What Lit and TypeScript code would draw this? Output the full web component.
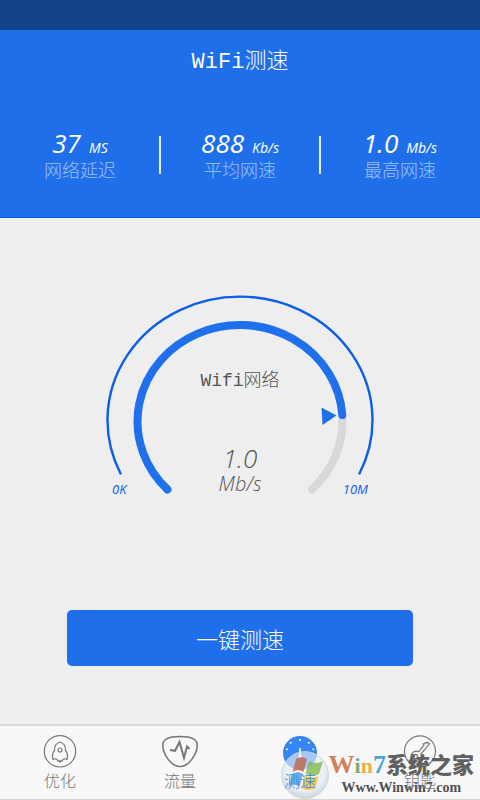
import { LitElement, html, svg, css } from "lit";
import { customElement } from "lit/decorators.js";

const stats = [
  { value: "37", unit: "MS", label: "网络延迟" },
  { value: "888", unit: "Kb/s", label: "平均网速" },
  { value: "1.0", unit: "Mb/s", label: "最高网速" },
];

const tabs = [
  {
    label: "优化",
    active: false,
    icon: svg`<circle cx="18" cy="16.300" r="15.700"/>
      <path d="M18 7c-4 1-5.600 5-5.600 9-2 1.500-2.200 5-1.600 8.200 1.500-.6 2.500-.6 4 0l1.200 2 1-.6 1 1.600 1-1.600 1 .6 1.200-2c1.500-.6 2.500-.6 4 0 .6-3.200.4-6.700-1.600-8.200 0-4-1.600-8-5.600-9z"/>
      <circle cx="18" cy="15" r="2"/>`,
  },
  {
    label: "流量",
    active: false,
    icon: svg`<path class="rim" d="M18 1.500C28 1.500 35.200 4 35.200 10 35.200 19 27 31.500 18 31.500S.8 19 .8 10C.8 4 8 1.500 18 1.500z"/>
      <path class="bold" d="M8 15l5 .8L17.500 7 22 23l3-11.500 2.500 2.500"/>`,
  },
  {
    label: "测速",
    active: true,
    icon: svg`<circle class="disc" cx="18" cy="18" r="17"/>
      <path class="hand" d="M17.300 13h1.400l.8 10h-3z"/>
      <g class="ticks"><circle cx="18" cy="5" r="1"/><circle cx="8.700" cy="7.700" r="1"/><circle cx="26.700" cy="7.700" r="1"/><circle cx="5" cy="14.300" r="1"/><circle cx="31.300" cy="14.300" r="1"/></g>`,
  },
  {
    label: "钥匙",
    active: false,
    icon: svg`<circle cx="18" cy="16.300" r="15.500"/>
      <path d="M16.500 16.800L22 10.200l-.8-1.200 1.600-.4.600-1.200 1.400.6.800-.8 2 1.600-8.800 10.400a5.200 5.200 0 1 1-2.300-2.400z"/>
      <circle cx="13.500" cy="21.500" r="2.200"/>`,
  },
];

@customElement("app-root")
export class AppRoot extends LitElement {
  static styles = css`
    :host {
      display: flex;
      flex-direction: column;
      min-height: 100vh;
      background: #eee;
      color: #555;
      font-family: "Liberation Mono", "Noto Sans CJK SC", monospace;
      font-weight: 300;
    }
    * { box-sizing: border-box; }
    .status { height: 30px; background: #134389; }
    header {
      background: #206fea;
      color: #fff;
      padding: 17px 0 32px;
      border-bottom: 1px solid #0a5ae6;
    }
    h1 {
      margin: 0;
      font-size: 22px;
      line-height: 32px;
      font-weight: 300;
      text-align: center;
    }
    .stats {
      display: grid;
      grid-template-columns: repeat(3, 1fr);
      margin-top: 48px;
    }
    .stat { position: relative; text-align: center; }
    .stat + .stat::before {
      content: "";
      position: absolute;
      left: -1px;
      top: 9px;
      width: 2px;
      height: 38px;
      background: #e3edff;
    }
    .reading {
      display: flex;
      justify-content: center;
      align-items: baseline;
      gap: 8px;
      height: 32px;
    }
    .num, .unit, .speed, .per { font-family: "Open Sans", "Liberation Sans", sans-serif; font-style: italic; }
    .num { font-size: 26px; line-height: 32px; font-weight: 400; }
    .unit { font-size: 14px; line-height: 20px; font-weight: 400; }
    .caption { font-size: 18px; line-height: 26px; color: #9cc1fa; }
    main {
      flex: 1;
      display: flex;
      flex-direction: column;
      align-items: center;
      padding: 76px 14% 24px;
    }
    .gauge { position: relative; width: 272px; height: 206px; }
    .gauge svg { display: block; width: 100%; height: 100%; }
    .outer { fill: none; stroke: #0b5eea; stroke-width: 2.400; stroke-linecap: round; }
    .track, .fill { fill: none; stroke-width: 8; stroke-linecap: round; }
    .track { stroke: #d8d8d8; }
    .fill { stroke: #1f70ec; }
    .pointer { fill: #1f6fe8; }
    .readout {
      position: absolute;
      inset: 74px 0 0;
      text-align: center;
    }
    .network { font-size: 18px; line-height: 26px; }
    .speed { font-size: 26px; line-height: 28px; margin-top: 50px; }
    .per { font-size: 20px; line-height: 24px; }
    .ends {
      width: 256px;
      display: flex;
      justify-content: space-between;
      margin-top: -20px;
      font: italic 400 13px/18px "Open Sans", "Liberation Sans", sans-serif;
      color: #0b5eea;
    }
    .start {
      width: 100%;
      height: 56px;
      margin-top: 112px;
      border: 0;
      border-radius: 5px;
      background: #206fea;
      color: #fff;
      font: inherit;
      font-size: 22px;
    }
    nav {
      position: relative;
      display: grid;
      grid-template-columns: repeat(4, 1fr);
      height: 76px;
      border-top: 2px solid #dadada;
      border-bottom: 1px solid #d5d5d5;
      background: #f8f8f8;
    }
    nav a {
      display: flex;
      flex-direction: column;
      align-items: center;
      padding-top: 9px;
      color: #777;
      text-decoration: none;
      font-size: 16px;
      line-height: 24px;
    }
    nav a span { position: relative; z-index: 1; }
    nav a.active { color: #3485f5; }
    nav a svg { width: 36px; height: 36px; fill: none; stroke: currentColor; stroke-width: 1.200; flex: none; }
    nav a .rim { stroke-width: 1.600; }
    nav a .bold { stroke-width: 2; }
    .disc { fill: #3485f5; stroke: none; }
    .hand, .ticks { fill: #fff; stroke: none; }
    .mark {
      position: absolute;
      right: 6px;
      bottom: 0;
      display: flex;
      align-items: center;
      pointer-events: none;
    }
    .mark svg { width: 48px; height: 48px; flex: none; }
    .words { text-align: center; white-space: nowrap; }
    .brand { font: 900 22px/24px "Liberation Serif", "Noto Sans CJK SC", serif; color: #606060; }
    .brand .w { color: #d47e5b; }
    .brand .i { color: #79a978; }
    .brand .n { color: #edae48; }
    .brand .s { color: #45a6d6; }
    .brand .w, .brand .s { font-size: 26px; }
    .site { font: 700 14px/20px "Liberation Serif", serif; color: #505050; }
  `;

  render() {
    return html`
      <div class="status"></div>
      <header>
        <h1>WiFi测速</h1>
        <div class="stats">
          ${stats.map(
            (s) => html`<div class="stat">
              <div class="reading"><span class="num">${s.value}</span><span class="unit">${s.unit}</span></div>
              <div class="caption">${s.label}</div>
            </div>`
          )}
        </div>
      </header>
      <main>
        <div class="gauge">
          <svg viewBox="104 294 272 206" aria-hidden="true">
            <path class="outer" d="M120.500 473.500A132.500 123.500 0 1 1 359.500 473.500" />
            <path class="track" d="M342.300 415A102.500 96.400 0 0 1 312 489.500" />
            <path class="fill" d="M167.500 489.500A102.500 96.400 0 1 1 342.300 415" />
            <path class="pointer" d="M321.500 407.500L336.500 415.500L322.500 425z" />
          </svg>
          <div class="readout">
            <div class="network">Wifi网络</div>
            <div class="speed">1.0</div>
            <div class="per">Mb/s</div>
          </div>
        </div>
        <div class="ends"><span>0K</span><span>10M</span></div>
        <button class="start" type="button">一键测速</button>
      </main>
      <nav>
        ${tabs.map(
          (t) => html`<a href="#" class=${t.active ? "active" : ""}>
            <svg viewBox="0 0 36 36" aria-hidden="true">${t.icon}</svg>
            <span>${t.label}</span>
          </a>`
        )}
        <div class="mark">
          <svg viewBox="0 0 48 48" aria-hidden="true">
            <defs>
              <radialGradient id="orb" cx="50%" cy="40%" r="60%">
                <stop offset="0" stop-color="#fff" stop-opacity=".55" />
                <stop offset=".7" stop-color="#e3ebf0" stop-opacity=".65" />
                <stop offset="1" stop-color="#b9c8d3" stop-opacity=".7" />
              </radialGradient>
            </defs>
            <circle cx="24" cy="24" r="23.500" fill="url(#orb)" stroke="#c6d1d9" stroke-width=".8" />
            <g opacity=".75">
              <path fill="#c65c3d" d="M15 8c4-2.500 7-2.500 11 0l-3.500 13c-4-2.500-7-2.500-11 0z" />
              <path fill="#79b541" d="M28 10c5 2.500 9 2.500 14 0l-4 13c-5 2.500-9 2-13.500-.5z" />
              <path fill="#4a9ad4" d="M11 23c4-2.500 7-2.500 11 0l-3.500 12.500c-4-2.500-7-2.500-11 0z" />
              <path fill="#f0b736" d="M24 24.500c5 2.500 9 2.500 13.500.5L34 37.500c-5 2-9 2-13.500-.5z" />
            </g>
          </svg>
          <div class="words">
            <div class="brand"><span class="w">W</span><span class="i">i</span><span class="n">n</span><span class="s">7</span>系统之家</div>
            <div class="site">Www.Winwin7.com</div>
          </div>
        </div>
      </nav>
    `;
  }
}
